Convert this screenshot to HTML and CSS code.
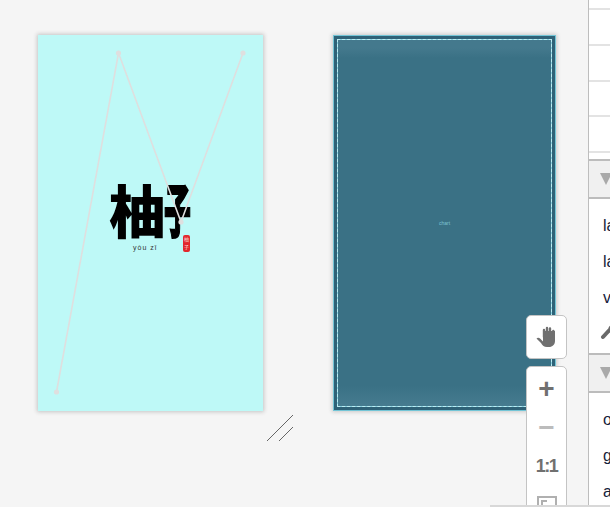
FILE: index.html
```html
<!DOCTYPE html>
<html lang="zh">
<head>
<meta charset="utf-8">
<title>Editor</title>
<link rel="stylesheet" href="styles.css">
</head>
<body>
<main class="stage">
  <section class="page page-logo">
    <svg class="guide" width="225" height="376" viewBox="0 0 225 376">
      <polyline points="18.5,357 80.5,18 143,187 205,18" fill="none" stroke="#dfdfdf" stroke-width="1.6"/>
      <circle cx="18.5" cy="357" r="2.6" fill="#dfdfdf"/>
      <circle cx="80.5" cy="18" r="2.6" fill="#dfdfdf"/>
      <circle cx="143" cy="187" r="2.6" fill="#dfdfdf"/>
      <circle cx="205" cy="18" r="2.6" fill="#dfdfdf"/>
    </svg>
    <div class="logo">
      <div class="logo-mark"><span class="logo-you">柚</span><span class="logo-zi">子</span></div>
      <div class="logo-pinyin">yòu zǐ</div>
      <div class="logo-seal">柚子</div>
    </div>
  </section>
  <section class="page page-chart">
    <div class="chart-frame"><span class="chart-label">chart</span></div>
  </section>
  <svg class="resize-grip" width="28" height="28" viewBox="0 0 28 28">
    <path d="M1 27 27 1M13 27 27 13" stroke="#666" stroke-width="1" fill="none"/>
  </svg>
</main>

<aside class="panel">
  <div class="row row-first"></div>
  <div class="row"></div>
  <div class="row"></div>
  <div class="row"></div>
  <div class="row row-last"></div>
  <div class="section-head"><i class="tri"></i></div>
  <div class="items">
    <div class="item">layout</div>
    <div class="item">layer</div>
    <div class="item">value</div>
  </div>
  <div class="tool-row">
    <svg width="16" height="20" viewBox="0 0 16 20">
      <path d="M3 14 9 7.500" stroke="#6a6a6a" stroke-width="4" stroke-linecap="round" fill="none"/>
      <path d="M8.500 8A5 5 0 0 1 14 1.500L11.500 5 14 8l2-1v3a5 5 0 0 1-7.500-2Z" fill="#6a6a6a"/>
    </svg>
  </div>
  <div class="section-head"><i class="tri"></i></div>
  <div class="items">
    <div class="item">option</div>
    <div class="item">grid</div>
    <div class="item">axis</div>
  </div>
</aside>

<div class="tool hand">
  <svg width="24" height="24" viewBox="0 0 24 24">
    <path d="M1.500 13.500c1.200-1.200 2.800-.8 3.800.3L8 16.500 8 6h12v10c0 3.500-2.500 6-6 6h-2c-3 0-4.500-1.500-6-4Z" fill="#707070"/>
    <path d="M9 12V5M12 12V3M15 12V3.500M18.300 13V6" stroke="#707070" stroke-width="2.400" stroke-linecap="round" fill="none"/>
  </svg>
</div>
<div class="tool zoombar">
  <button class="zb plus">+</button>
  <button class="zb minus">−</button>
  <button class="zb ratio">1:1</button>
  <button class="zb fit"><i class="fit-icon"><i class="fit-corner"></i></i></button>
</div>
<div class="bottom-line"></div>
</body>
</html>
```
FILE: styles.css
```css
* { box-sizing: border-box; }
html, body { margin: 0; height: 507px; overflow: hidden; }
body {
  position: relative;
  display: flex;
  background: #f5f5f5;
  font-family: "Liberation Sans", Arial, sans-serif;
}
.stage {
  position: relative;
  flex: 0 0 588px;
  display: flex;
  gap: 70px;
  padding: 35px 0 0 38px;
  align-items: flex-start;
}
.page {
  position: relative;
  height: 376px;
  box-shadow: 0 0 4px 1px #c4c4c4;
}
.page-logo { width: 225px; background: #bef9f7; }
.page-chart {
  width: 223px;
  background: #2f6277;
  padding: 4px;
  box-shadow: 0 0 4px 1px #c8c8c8;
  outline: 1px solid #73c5d6;
  outline-offset: -1px;
}
.guide { position: absolute; inset: 0; z-index: 2; }
.logo { position: absolute; left: 71px; top: 144px; width: 90px; height: 78px; }
.logo-mark {
  display: flex;
  color: #000;
  font-family: "Noto Sans CJK SC", sans-serif;
  font-weight: 900;
  filter: blur(.5px);
  line-height: 58px;
  height: 58px;
}
.logo-you { display: block; width: 55px; font-size: 57px; }
.logo-zi {
  display: block;
  width: 26px;
  font-size: 42px;
  -webkit-text-stroke: 1.5px #000;
  transform: scaleX(.64) scaleY(1.34);
  transform-origin: 0 50%;
}
.logo-pinyin {
  position: absolute; left: 24px; top: 64px;
  font-size: 7px; letter-spacing: 1px; color: #333; line-height: 10px; white-space: nowrap;
}
.logo-seal {
  position: absolute; left: 74px; top: 56px; width: 7px; height: 17px;
  background: #e2282d; border-radius: 2px; color: #f8d8d8;
  font: 5px/8px "Noto Sans CJK SC", sans-serif; text-align: center; overflow: hidden;
}
.chart-frame {
  position: relative;
  height: 100%;
  border: 1px solid #86d0e0;
  background: linear-gradient(#44798d 0, #44798d 8px, #3a7185 18px, #3a7185 calc(100% - 20px), #467b8f 100%);
  display: flex;
  align-items: center;
  justify-content: center;
}
.chart-frame::before {
  content: "";
  position: absolute;
  inset: -1px;
  border: 1px dashed #bcecf2;
}
.chart-label { font-size: 5px; line-height: 6px; color: #7fc3d2; }
.resize-grip { position: absolute; left: 266px; top: 414px; }
.panel {
  flex: 1;
  height: 507px;
  background: #fff;
  border-left: 1px solid #bdbdbd;
  overflow: hidden;
}
.row { height: 35.75px; border-bottom: 2px solid #e3e3e3; }
.row-first { height: 10px; }
.row-last { margin-bottom: 6px; }
.section-head {
  height: 40px;
  background: #f0f0f0;
  border-top: 2px solid #bcbcbc;
  border-bottom: 2px solid #bcbcbc;
  padding: 12px 0 0 11px;
}
.tri {
  display: block; width: 0; height: 0;
  border-left: 6px solid transparent;
  border-right: 6px solid transparent;
  border-top: 12px solid #a9a9a9;
}
.items { padding-top: 9px; }
.item {
  height: 36px;
  padding-left: 14px;
  font-size: 16px;
  line-height: 36px;
  color: #14213a;
  white-space: nowrap;
}
.tool-row { height: 37px; padding: 7px 0 0 11px; }
.tool-row svg { display: block; }
.tool {
  position: absolute;
  left: 526px;
  width: 41px;
  background: #fff;
  border: 1px solid #c4c4c4;
  border-radius: 5px;
}
.hand { top: 315px; height: 44px; display: flex; align-items: center; justify-content: center; }
.zoombar { top: 366px; height: 150px; display: flex; flex-direction: column; padding-top: 2px; }
.zb {
  height: 39px; flex: none; padding: 0; border: 0; background: none;
  font-family: "Liberation Sans", Arial, sans-serif; font-weight: 700; color: #707070;
  display: flex; align-items: center; justify-content: center;
}
.plus { font-size: 28px; }
.minus { font-size: 28px; color: #bcbcbc; }
.ratio { font-size: 18px; letter-spacing: -1.5px; }
.fit-icon { display: block; width: 20px; height: 20px; border: 2px solid #b0b0b0; padding: 2px; }
.fit-corner { display: block; width: 6px; height: 6px; border-top: 2px solid #b0b0b0; border-left: 2px solid #b0b0b0; }
.bottom-line {
  position: absolute; left: 490px; right: 0; top: 505px; height: 2px;
  background: #d8d8d8;
}
```
